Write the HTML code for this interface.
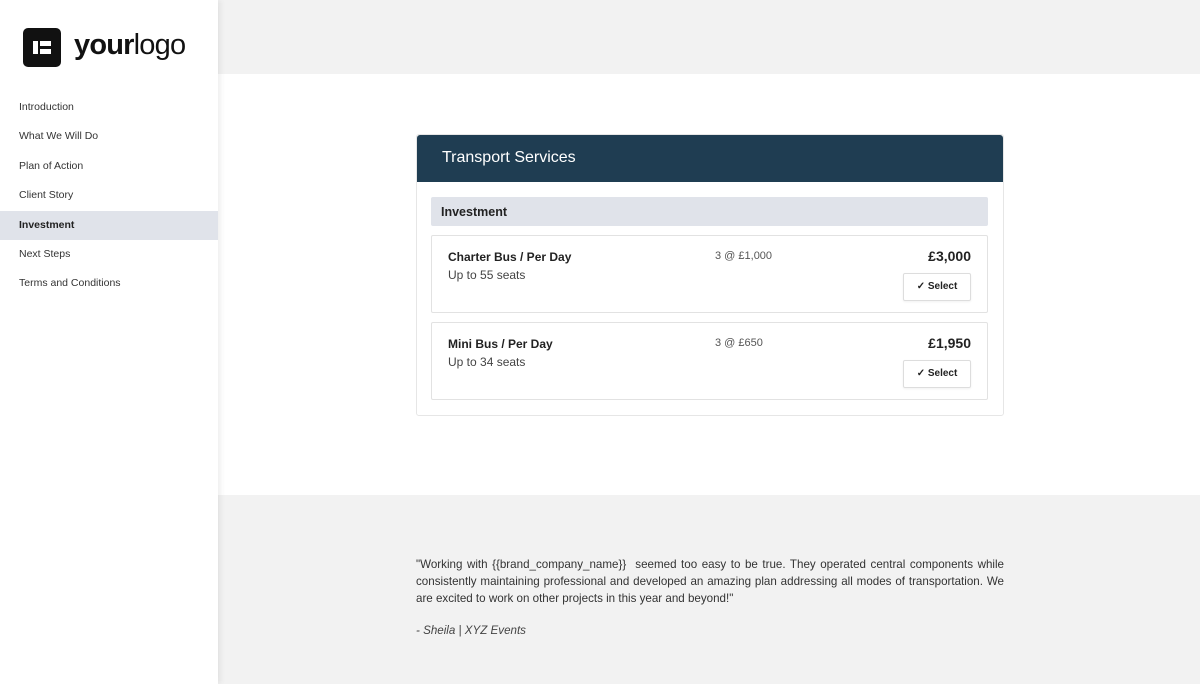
<!DOCTYPE html>
<html><head><meta charset="utf-8"><style>
*{margin:0;padding:0;box-sizing:border-box}
body{width:1200px;height:684px;overflow:hidden;font-family:"Liberation Sans",sans-serif;background:#f2f2f2;position:relative;color:#222}
.side{position:absolute;left:0;top:0;width:218px;height:684px;background:#fff;box-shadow:2px 0 6px rgba(0,0,0,.08);z-index:2}
.logo{position:absolute;left:23px;top:28px;width:38px;height:39px;background:#111;border-radius:5px}
.logo i{position:absolute;background:#fff}
.lt{position:absolute;left:74px;top:29px;font-size:29px;letter-spacing:-0.8px;color:#111}
.nav{position:absolute;top:93px;left:0;width:218px}
.nav div{height:29.4px;line-height:29.4px;padding-left:19px;font-size:10.5px;color:#333}
.nav .a{background:#e0e3ea;font-weight:bold;color:#222}
.top{position:absolute;left:218px;top:0;right:0;height:74px;background:#f2f2f2}
.main{position:absolute;left:218px;top:74px;right:0;height:421px;background:#fff}
.card{position:absolute;left:416px;top:134px;width:588px;height:282px;background:#fff;border:1px solid #e6e6e6;border-radius:3px;z-index:3}
.hd{height:47px;background:#1f3d52;color:#fff;font-size:16px;padding:14px 0 0 25px;border-radius:3px 3px 0 0}
.inv{position:absolute;left:14px;top:62px;width:557px;height:29px;background:#e0e3ea;font-weight:bold;font-size:12.5px;padding:8px 10px;border-radius:2px}
.it{position:absolute;left:14px;width:557px;height:78px;border:1px solid #e2e2e2;border-radius:2px}
.it b{position:absolute;left:16px;top:14px;font-size:12px}
.it .s{position:absolute;left:16px;top:32px;font-size:12px;color:#444}
.it .q{position:absolute;left:283px;top:14px;font-size:11px;color:#555}
.it .p{position:absolute;right:16px;top:12px;font-size:14px;font-weight:bold}
.it .btn{position:absolute;right:16px;top:37px;width:68px;height:28px;border:1px solid #ddd;border-radius:2px;font-size:10px;font-weight:bold;text-align:center;line-height:26px;box-shadow:0 1px 2px rgba(0,0,0,.06)}
.q2{position:absolute;left:416px;top:556px;width:588px;font-size:11.6px;line-height:17px;color:#333;text-align:justify}
.sig{position:absolute;left:416px;top:624px;font-size:11.6px;font-style:italic;color:#444}
</style></head><body>
<div class="side">
<div class="logo"><i style="left:10px;top:13px;width:5px;height:13px"></i><i style="left:17px;top:13px;width:11px;height:5px"></i><i style="left:17px;top:21px;width:11px;height:5px"></i></div>
<div class="lt"><b>your</b>logo</div>
<div class="nav"><div>Introduction</div><div>What We Will Do</div><div>Plan of Action</div><div>Client Story</div><div class="a">Investment</div><div>Next Steps</div><div>Terms and Conditions</div></div>
</div>
<div class="top"></div><div class="main"></div>
<div class="card">
<div class="hd">Transport Services</div>
<div class="inv">Investment</div>
<div class="it" style="top:100px"><b>Charter Bus / Per Day</b><div class="s">Up to 55 seats</div><div class="q">3 @ £1,000</div><div class="p">£3,000</div><div class="btn">✓ Select</div></div>
<div class="it" style="top:187px"><b>Mini Bus / Per Day</b><div class="s">Up to 34 seats</div><div class="q">3 @ £650</div><div class="p">£1,950</div><div class="btn">✓ Select</div></div>
</div>
<div class="q2">"Working with {{brand_company_name}}&nbsp; seemed too easy to be true. They operated central components while consistently maintaining professional and developed an amazing plan addressing all modes of transportation. We are excited to work on other projects in this year and beyond!"</div>
<div class="sig">- Sheila | XYZ Events</div>
</body></html>
